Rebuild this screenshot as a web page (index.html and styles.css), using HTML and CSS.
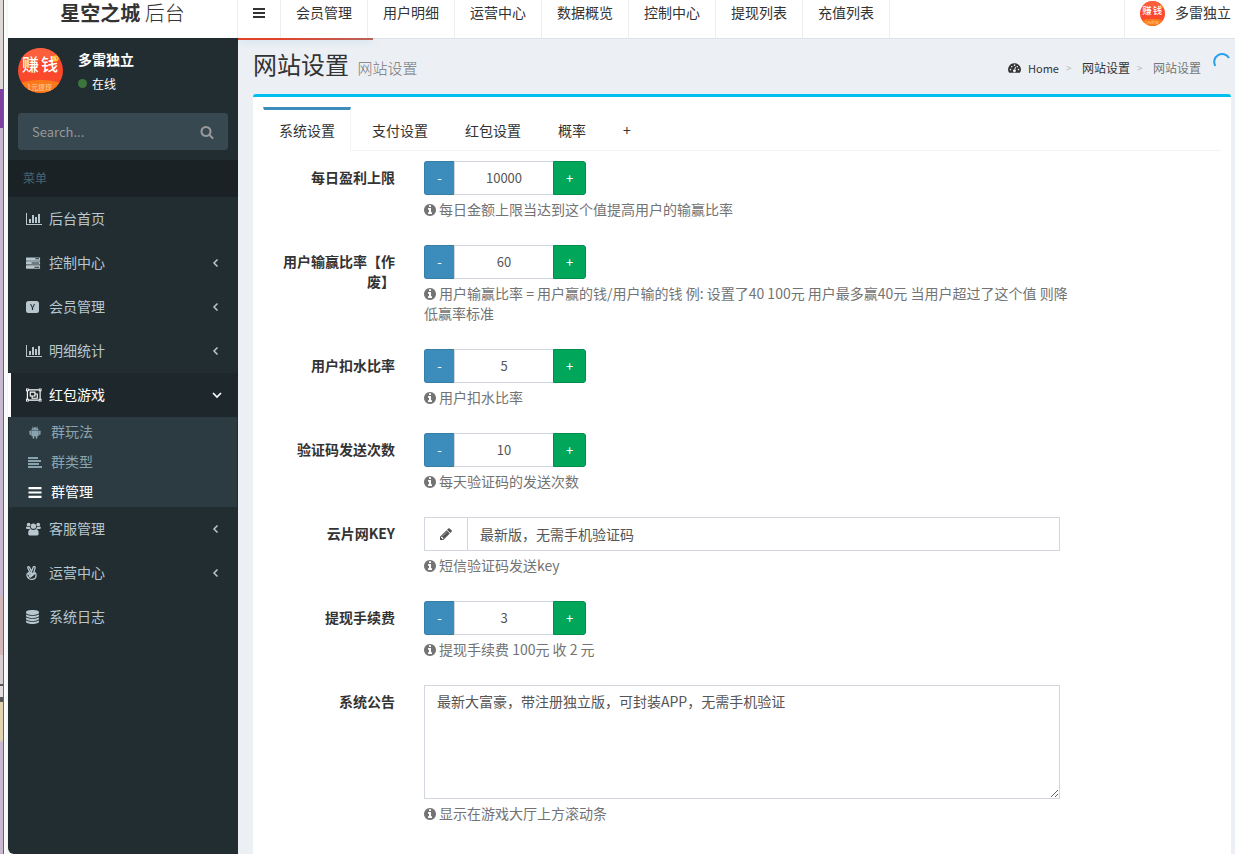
FILE: index.html
```
<!DOCTYPE html>
<html lang="zh-CN">
<head>
<meta charset="utf-8">
<meta name="viewport" content="width=device-width, initial-scale=1">
<title>网站设置 - 星空之城后台</title>
<link rel="stylesheet" href="styles.css">
</head>
<body>
<svg class="sprite" aria-hidden="true">
  <symbol id="chart" viewBox="0 0 2048 1792"><path d="M640 896v512h-256v-512h256zm384-512v1024h-256v-1024h256zm1024 1152v128h-2048v-1536h128v1408h1920zm-640-896v768h-256v-768h256zm384-384v1152h-256v-1152h256z"/></symbol>
  <symbol id="search" viewBox="0 0 1792 1792"><path d="M1216 832q0-185-131.500-316.500t-316.500-131.500-316.500 131.500-131.500 316.500 131.500 316.500 316.500 131.500 316.500-131.500 131.500-316.500zm512 832q0 52-38 90t-90 38q-54 0-90-38l-343-342q-179 124-399 124-143 0-273.500-55.500t-225-150-150-225-55.500-273.500 55.500-273.500 150-225 225-150 273.500-55.500 273.500 55.500 225 150 150 225 55.500 273.500q0 220-124 399l343 343q37 37 37 90z"/></symbol>
  <symbol id="info" viewBox="128 128 1536 1536"><path d="M1152 1376v-160q0-14-9-23t-23-9h-96v-512q0-14-9-23t-23-9h-320q-14 0-23 9t-9 23v160q0 14 9 23t23 9h96v320h-96q-14 0-23 9t-9 23v160q0 14 9 23t23 9h448q14 0 23-9t9-23zm-128-896v-160q0-14-9-23t-23-9h-192q-14 0-23 9t-9 23v160q0 14 9 23t23 9h192q14 0 23-9t9-23zm640 416q0 209-103 385.500t-279.500 279.500-385.500 103-385.500-103-279.500-279.500-103-385.500 103-385.500 279.500-279.500 385.500-103 385.500 103 279.500 279.500 103 385.500z"/></symbol>
  <symbol id="pencil" viewBox="0 0 1792 1792"><path d="M491 1536l91-91-235-235-91 91v107h128v128h107zm523-928q0-22-22-22-10 0-17 7l-542 542q-7 7-7 17 0 22 22 22 10 0 17-7l542-542q7-7 7-17zm-54-192l416 416-832 832h-416v-416zm683 96q0 53-37 90l-166 166-416-416 166-165q36-38 90-38 53 0 91 38l235 234q37 39 37 91z"/></symbol>
  <symbol id="server" viewBox="0 0 16 14"><path fill-rule="evenodd" d="M.5 1h14a.5.5 0 0 1 .5.500v2.500a.5.5 0 0 1-.5.500h-14a.5.5 0 0 1-.5-.5v-2.500a.5.5 0 0 1 .5-.5zM10 2v1h4V2zM.5 5.200h14a.5.5 0 0 1 .5.500v2.500a.5.5 0 0 1-.5.500h-14A.5.5 0 0 1 0 8.200V5.700a.5.5 0 0 1 .5-.5zM6 6.500v1h8v-1zM.5 9.500h14a.5.5 0 0 1 .5.500v2.500a.5.5 0 0 1-.5.500h-14a.5.5 0 0 1-.5-.5V10a.5.5 0 0 1 .5-.5zM9 11v1h5v-1z"/></symbol>
  <symbol id="ysquare" viewBox="0 0 14 14"><path fill-rule="evenodd" d="M2.500 1h8A2.500 2.500 0 0 1 13 3.500v7a2.500 2.500 0 0 1-2.500 2.500h-8A2.500 2.500 0 0 1 0 10.500v-7A2.500 2.500 0 0 1 2.500 1zM4 4 5.900 7.800v2.200h1.200V7.800L9 4H7.900L6.500 7 5.100 4z"/></symbol>
  <symbol id="group" viewBox="0 0 17 14"><g fill="none" stroke="currentColor" stroke-width="1.200"><path d="M2.500 1.500h11M2.500 12.500h11M1.500 2.500v9M15 2.500v9"/><path d="M4.500 4h5v4h-5zM9.500 6H12v4.500H6.500V8"/></g><path d="M0 0h3v3H0zM13.500 0h3v3h-3zM0 11h3v3H0zM13.500 11h3v3h-3z"/><path fill="#1e282c" d="M1 1h1v1H1zM14.500 1h1v1h-1zM1 12h1v1H1zM14.500 12h1v1h-1z"/></symbol>
  <symbol id="android" viewBox="0 0 12 14"><path fill-rule="evenodd" d="m3.200.3.900 1.400a4.500 4.500 0 0 1 3.800 0L8.800.3l.3.2-.8 1.500A3.300 3.300 0 0 1 10 4.500H2A3.300 3.300 0 0 1 3.700 2L2.900.5zM4 2.800v.8h.8v-.8zm3.200 0v.8H8v-.8zM2 5h8v5.200a.8.8 0 0 1-.8.800H8.500v2a.8.8 0 0 1-1.700 0v-2H5.200v2a.8.8 0 0 1-1.700 0v-2h-.7a.8.8 0 0 1-.8-.8z"/><rect y="4.800" width="1.600" height="5" rx=".8"/><rect x="10.400" y="4.800" width="1.600" height="5" rx=".8"/></symbol>
  <symbol id="align" viewBox="0 0 14 13"><path d="M0 1h10v2H0zM0 4h13v2H0zM0 7h11v2H0zM0 10h14v2H0z"/></symbol>
  <symbol id="bars" viewBox="0 0 12 12"><path d="M0 1h12v2H0zM0 5h12v2H0zM0 9h12v2H0z"/></symbol>
  <symbol id="users" viewBox="0 0 16 14"><circle cx="2.800" cy="2.200" r="2"/><circle cx="13" cy="2.200" r="2"/><circle cx="7.900" cy="4" r="2.800"/><path d="M1.200 4.200c1.200.8 2 .8 3 .3.100 1.200.5 1.900 1.200 2.500H1.500C.5 7 0 6.500 0 5.700c0-.8.3-1.500 1.200-1.500zM14.600 4.200c-1.200.8-2 .8-3 .3-.1 1.200-.5 1.900-1.200 2.500h3.900c1 0 1.500-.5 1.500-1.300 0-.8-.3-1.500-1.200-1.500zM5 7c2 1.400 3.800 1.400 5.800 0 2 .2 2.700 2.500 2.700 4.700 0 1.500-.9 2.300-2.200 2.300H4.500c-1.300 0-2.200-.8-2.200-2.300C2.300 9.500 3 7.200 5 7z"/></symbol>
  <symbol id="peace" viewBox="0 0 15 14"><g fill="none" stroke="currentColor" stroke-width="1.300" stroke-linejoin="round" stroke-linecap="round"><path d="M3.800 6.200 1.800 2q-.2-1.300.7-1.400.7 0 1 .8l2 4.100L7.300 1q.4-.7 1.200-.4.8.4.600 1.200L7.800 6.500q2.300.3 2.200 1.700v2q-.5 3.200-4 3.200-3.800 0-4.800-3.300-.8-2.400.8-3.100 1-.6 2 .1M3.800 6.200l1.500 2.300-1.500 1L2 7.500M5.400 8.500 7.800 6.500M5 6.200l2 2.800-2.500 2M7 9l1.500-1.300M3 11l2-1.500"/></g></symbol>
  <symbol id="database" viewBox="0 0 15 14"><path d="M6.500 0C10.500 0 13 .9 13 2.200v.6C13 4 10.500 5 6.500 5S0 4 0 2.800v-.6C0 .9 2.500 0 6.500 0zM0 4.500C3 6.200 10 6.200 13 4.500v1.300C13 7 10.500 8 6.500 8S0 7 0 5.800zM0 7.500C3 9.200 10 9.200 13 7.500v1.300C13 10 10.500 11 6.500 11S0 10 0 8.800zM0 10.500c3 1.700 10 1.700 13 0v1.300C13 13 10.500 14 6.500 14S0 13 0 11.800z"/></symbol>
  <symbol id="left" viewBox="0 0 10 10"><path fill="none" stroke="currentColor" stroke-width="1.500" d="M5.500 1.500 2 5l3.500 3.500"/></symbol>
  <symbol id="down" viewBox="0 0 10 10"><path fill="none" stroke="currentColor" stroke-width="1.700" d="M1 3l4 4 4-4"/></symbol>
  <symbol id="gauge" viewBox="0 0 14 12"><path fill-rule="evenodd" d="M7 1a6.600 6.600 0 0 1 5.800 10.200H1.200A6.600 6.600 0 0 1 7 1zM2 6.800v1.500h1.500V6.800zM3.300 3.800v1.500h1.500V3.800zM6.300 2.300v1.500h1.500V2.300zM9.300 3.800v1.500h1.400V3.800zM10.500 6.800v1.500H12V6.800zM7.600 4.700 6.800 7.500a1.500 1.500 0 1 0 1 .3l.8-2.900z"/></symbol>
</svg>

<div class="app">
  <div class="backdrop"></div>
  <aside class="sidebar">
    <a class="brand" href="#"><b>星空之城</b> <span>后台</span></a>
    <div class="side-body">
      <div class="user-panel">
        <svg class="avatar" viewBox="0 0 45 45">
          <rect width="45" height="45" fill="#fb4a2b"/>
          <rect width="45" height="11" fill="#fb5f3c"/>
          <ellipse cx="22.500" cy="46" rx="31" ry="14" fill="#fb7a1c"/>
          <text x="4" y="23" font-size="17" font-weight="500" fill="#fff">赚</text>
          <text x="23" y="23" font-size="17" font-weight="500" fill="#fff">钱</text>
          <circle cx="37.500" cy="10.500" r="2.200" fill="none" stroke="#ffc91f" stroke-width="1.600"/>
          <text x="9" y="42" font-size="7" fill="#fdd0a0">1元提现</text>
        </svg>
        <div>
          <p class="user-name">多雷独立</p>
          <a class="status" href="#"><i class="dot"></i>在线</a>
        </div>
      </div>
      <form class="search">
        <input type="text" aria-label="Search" placeholder="Search...">
        <button type="button" aria-label="搜索"><svg><use href="#search"/></svg></button>
      </form>
      <h2 class="menu-title">菜单</h2>
      <nav class="menu">
        <a href="#"><svg class="ico wide"><use href="#chart"/></svg><span>后台首页</span></a>
        <a href="#"><svg class="ico"><use href="#server"/></svg><span>控制中心</span><svg class="arrow"><use href="#left"/></svg></a>
        <a href="#"><svg class="ico narrow"><use href="#ysquare"/></svg><span>会员管理</span><svg class="arrow"><use href="#left"/></svg></a>
        <a href="#"><svg class="ico wide"><use href="#chart"/></svg><span>明细统计</span><svg class="arrow"><use href="#left"/></svg></a>
        <a href="#" class="active"><svg class="ico wide"><use href="#group"/></svg><span>红包游戏</span><svg class="arrow"><use href="#down"/></svg></a>
        <div class="submenu">
          <a href="#"><svg class="ico"><use href="#android"/></svg><span>群玩法</span></a>
          <a href="#"><svg class="ico"><use href="#align"/></svg><span>群类型</span></a>
          <a href="#" class="current"><svg class="ico"><use href="#bars"/></svg><span>群管理</span></a>
        </div>
        <a href="#"><svg class="ico"><use href="#users"/></svg><span>客服管理</span><svg class="arrow"><use href="#left"/></svg></a>
        <a href="#"><svg class="ico"><use href="#peace"/></svg><span>运营中心</span><svg class="arrow"><use href="#left"/></svg></a>
        <a href="#"><svg class="ico"><use href="#database"/></svg><span>系统日志</span></a>
      </nav>
    </div>
  </aside>

  <div class="main">
    <header class="topbar">
      <button class="toggle" type="button" aria-label="切换菜单"><svg><use href="#bars"/></svg></button>
      <nav class="topnav">
        <a href="#">会员管理</a><a href="#">用户明细</a><a href="#">运营中心</a><a href="#">数据概览</a><a href="#">控制中心</a><a href="#">提现列表</a><a href="#">充值列表</a>
      </nav>
      <a class="account" href="#">
        <svg viewBox="0 0 45 45">
          <rect width="45" height="45" fill="#fb4a2b"/>
          <rect width="45" height="11" fill="#fb5f3c"/>
          <ellipse cx="22.500" cy="46" rx="31" ry="14" fill="#fb7a1c"/>
          <text x="4" y="23" font-size="17" font-weight="500" fill="#fff">赚</text>
          <text x="23" y="23" font-size="17" font-weight="500" fill="#fff">钱</text>
          <circle cx="37.500" cy="10.500" r="2.200" fill="none" stroke="#ffc91f" stroke-width="1.600"/>
          <text x="9" y="42" font-size="7" fill="#fdd0a0">1元提现</text>
        </svg>
        <span>多雷独立</span>
      </a>
      <div class="progress"></div>
    </header>

    <section class="page-head">
      <h1>网站设置 <small>网站设置</small></h1>
      <nav class="crumbs">
        <a class="home" href="#"><svg><use href="#gauge"/></svg>Home</a><i>&gt;</i><a href="#">网站设置</a><i>&gt;</i><span>网站设置</span>
      </nav>
      <svg class="spinner" viewBox="0 0 18 18"><path d="M2.300 13A7.800 7.800 0 0 1 16 5" fill="none" stroke="#29a0e8" stroke-width="2"/></svg>
    </section>

    <section class="box">
      <nav class="tabs">
        <a href="#" class="on">系统设置</a><a href="#">支付设置</a><a href="#">红包设置</a><a href="#">概率</a><a href="#">+</a>
      </nav>
      <form class="settings">
        <div class="row">
          <label for="limit">每日盈利上限</label>
          <div>
            <div class="stepper"><button type="button" class="minus">-</button><input id="limit" type="text" value="10000"><button type="button" class="plus">+</button></div>
            <p class="hint"><svg><use href="#info"/></svg>每日金额上限当达到这个值提高用户的输赢比率</p>
          </div>
        </div>
        <div class="row">
          <label for="ratio">用户输赢比率【作废】</label>
          <div>
            <div class="stepper"><button type="button" class="minus">-</button><input id="ratio" type="text" value="60"><button type="button" class="plus">+</button></div>
            <p class="hint"><svg><use href="#info"/></svg>用户输赢比率 = 用户赢的钱/用户输的钱 例: 设置了40 100元 用户最多赢40元 当用户超过了这个值 则降低赢率标准</p>
          </div>
        </div>
        <div class="row">
          <label for="rake">用户扣水比率</label>
          <div>
            <div class="stepper"><button type="button" class="minus">-</button><input id="rake" type="text" value="5"><button type="button" class="plus">+</button></div>
            <p class="hint"><svg><use href="#info"/></svg>用户扣水比率</p>
          </div>
        </div>
        <div class="row">
          <label for="sends">验证码发送次数</label>
          <div>
            <div class="stepper"><button type="button" class="minus">-</button><input id="sends" type="text" value="10"><button type="button" class="plus">+</button></div>
            <p class="hint"><svg><use href="#info"/></svg>每天验证码的发送次数</p>
          </div>
        </div>
        <div class="row">
          <label for="key">云片网KEY</label>
          <div>
            <div class="addon"><span><svg><use href="#pencil"/></svg></span><input id="key" type="text" value="最新版，无需手机验证码"></div>
            <p class="hint"><svg><use href="#info"/></svg>短信验证码发送key</p>
          </div>
        </div>
        <div class="row">
          <label for="fee">提现手续费</label>
          <div>
            <div class="stepper"><button type="button" class="minus">-</button><input id="fee" type="text" value="3"><button type="button" class="plus">+</button></div>
            <p class="hint"><svg><use href="#info"/></svg>提现手续费 100元 收 2 元</p>
          </div>
        </div>
        <div class="row">
          <label for="notice">系统公告</label>
          <div>
            <textarea id="notice" rows="5">最新大富豪，带注册独立版，可封装APP，无需手机验证</textarea>
            <p class="hint"><svg><use href="#info"/></svg>显示在游戏大厅上方滚动条</p>
          </div>
        </div>
      </form>
    </section>
  </div>
</div>
</body>
</html>
```

FILE: styles.css
```
* { box-sizing: border-box; }
body {
  margin: 0;
  font: 14px/20px "Noto Sans CJK SC", sans-serif;
  color: #333;
  background: #ecf0f5;
}
a { color: inherit; text-decoration: none; }
p, h1, h2 { margin: 0; font-weight: 400; }
i { font-style: normal; }
svg { fill: currentColor; flex: none; }
input, button, textarea { font: inherit; color: inherit; margin: 0; }
.sprite { position: absolute; width: 0; height: 0; }

.app { display: flex; min-height: 100vh; overflow: hidden; }
.backdrop {
  width: 8px;
  flex: none;
  background:
    linear-gradient(90deg, transparent 3px, #6a6068 3px, #6a6068 4px, #fff 4px, #f4f6f6 8px),
    linear-gradient(#ddd9d6 0 89px, #7d3fa0 89px 128px, #c8b8d0 128px 595px, #d3b6b6 597px 655px, #d8cfd4 655px 684px, #555 684px 686px, #e2dde0 686px 697px, #555 697px 702px, #e0d4b0 702px 740px, #c8b8d0 742px);
}

/* Sidebar */
.sidebar { width: 230px; flex: none; display: flex; flex-direction: column; background: #fff; color: #b8c7ce; }
.brand { height: 38px; border-right: 1px solid #eee; font-size: 20px; line-height: 26px; text-align: center; color: #333; }
.brand span { font-weight: 300; }
.side-body { flex: 1; background: #222d32; border-bottom-left-radius: 6px; }
.user-panel { display: flex; align-items: flex-start; gap: 15px; padding: 10px 10px 6px; }
.avatar { width: 45px; height: 45px; border-radius: 50%; }
.user-name { line-height: 22px; font-weight: 700; color: #fff; }
.status { display: flex; align-items: center; gap: 5px; line-height: 27px; font-size: 12px; color: #fff; }
.dot { width: 9px; height: 9px; border-radius: 50%; background: #3c763d; }
.search { display: flex; margin: 10px; border: 1px solid #374850; border-radius: 3px; background: #374850; color: #999; }
.search input { flex: 1; min-width: 0; height: 35px; padding: 0 13px; border: 0; background: none; font-size: 13px; }
.search input::placeholder { color: #999; }
.search button { width: 40px; padding: 0; border: 0; background: none; }
.search svg { display: block; width: 14px; height: 14px; margin: 0 auto; }
.menu-title { padding: 7px 15px 9px; background: #1a2226; color: #4b646f; font-size: 12px; line-height: 21px; }
.menu > a { display: flex; align-items: center; height: 44px; padding: 0 16px 0 15px; border-left: 3px solid transparent; }
.menu > a .ico { width: 15px; height: 14px; margin-right: 8px; }
.menu > a .wide { width: 16px; margin-right: 7px; }
.menu > a .narrow { width: 14px; margin-right: 9px; }
.menu span { padding-bottom: 2px; }
.arrow { width: 10px; height: 10px; margin-left: auto; }
.menu > a.active { background: #1e282c; border-color: #fff; color: #fff; }
.submenu { margin: 0 1px; background: #2c3b41; color: #8aa4af; }
.submenu a { display: flex; align-items: center; gap: 9px; height: 30px; padding-left: 19px; }
.submenu .ico { width: 14px; height: 13px; }
.submenu .current { color: #fff; }

/* Top bar */
.main { flex: 1; min-width: 0; padding-right: 4px; }
.topbar { position: relative; display: flex; height: 39px; margin-right: -4px; padding-right: 4px; background: #fff; border-bottom: 1px solid #dfe3e8; line-height: 24px; }
.toggle { width: 43px; padding: 0 0 12px; border: 0; border-right: 1px solid #eee; background: none; }
.toggle svg { display: block; width: 12px; height: 12px; margin: 0 auto; }
.topnav { display: flex; }
.topnav a { padding: 0 15px; border-right: 1px solid #eee; white-space: nowrap; }
.account { display: flex; gap: 10px; margin-left: auto; padding-left: 15px; border-left: 1px solid #eee; white-space: nowrap; }
.account svg { width: 25px; height: 25px; margin-top: 1px; border-radius: 50%; }
.progress { position: absolute; top: 38px; left: 0; width: 135px; height: 2px; background: linear-gradient(90deg, #e0432a 30%, #b8645a); box-shadow: 0 0 8px rgba(60, 141, 188, .4); clip-path: inset(0 -8px -8px 0); }

/* Page heading */
.page-head { display: flex; align-items: center; justify-content: space-between; height: 55px; padding: 0 30px 2px 15px; position: relative; }
h1 { font-size: 24px; line-height: 26px; white-space: nowrap; }
h1 small { margin-left: 3px; font-size: 15px; font-weight: 300; color: #777; }
.crumbs { display: flex; align-items: center; padding-top: 4px; font-size: 12px; white-space: nowrap; }
.crumbs a { display: flex; align-items: center; gap: 7px; }
.crumbs .home { font-size: 11px; }
.crumbs svg { width: 13px; height: 12px; }
.crumbs i { width: 23px; padding-left: 7px; color: #bbb; font-size: 10px; }
.crumbs span { color: #777; }
.spinner { position: absolute; right: 0; top: 14px; width: 18px; height: 18px; }

/* Settings box */
.box { margin-left: 15px; min-height: calc(100vh - 94px); padding: 10px; background: #fff; border-top: 3px solid #00c0ef; border-radius: 3px 3px 0 0; }
.tabs { display: flex; gap: 5px; border-bottom: 1px solid #f4f4f4; }
.tabs a { height: 43px; padding: 10px 15px; border: 1px solid transparent; border-top: 3px solid transparent; border-bottom: 0; }
.tabs .on { height: 44px; margin-bottom: -1px; background: #fff; border-color: #3c8dbc #f4f4f4 transparent #fff; }
.settings { display: grid; gap: 25px; padding-top: 10px; }
.row { display: grid; grid-template-columns: 132px 24fr 5fr; column-gap: 29px; }
.row label { padding-top: 6px; text-align: right; font-weight: 700; }
.hint { margin: 4px -12px 1px 0; color: #737373; }
.hint svg { width: 12px; height: 12px; margin-right: 3px; vertical-align: -1px; }
.stepper { display: flex; height: 34px; }
.stepper input { width: 99px; padding: 0; border: 1px solid #d2d6de; border-right: 0; text-align: center; font-size: 13px; color: #555; }
.stepper button { padding: 0; color: #fff; font-size: 13px; }
.minus { width: 30px; background: #3c8dbc; border: 1px solid #367fa9; border-right: 0; border-radius: 3px 0 0 3px; }
.plus { width: 33px; background: #00a65a; border: 1px solid #008d4c; border-radius: 0 3px 3px 0; }
.addon { display: flex; height: 34px; border: 1px solid #d2d6de; color: #555; }
.addon span { display: flex; align-items: center; justify-content: center; width: 43px; border-right: 1px solid #d2d6de; }
.addon svg { width: 14px; height: 14px; }
.addon input { flex: 1; min-width: 0; padding: 0 12px; border: 0; background: none; }
textarea { display: block; width: 100%; height: 114px; padding: 5px 12px; border: 1px solid #d2d6de; border-radius: 0; color: #555; resize: vertical; }
```
